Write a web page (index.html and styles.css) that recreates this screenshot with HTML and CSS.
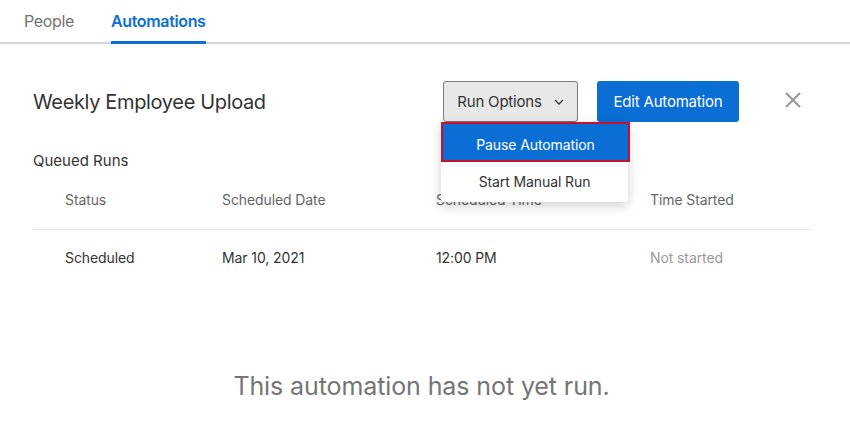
FILE: index.html
```html
<!DOCTYPE html>
<html lang="en">
<head>
    <meta charset="UTF-8">
    <meta name="viewport" content="width=device-width, initial-scale=1.0">
    <title>Automations</title>
    <link rel="stylesheet" href="styles.css">
</head>
<body>
    <nav class="tabs">
        <a class="tab">People</a>
        <a class="tab active">Automations</a>
    </nav>

    <main class="panel">
        <header class="panel-header">
            <h1>Weekly Employee Upload</h1>
            <div class="actions">
                <div class="menu-wrap">
                    <button class="btn btn-secondary">
                        Run Options
                        <svg class="chevron" width="10" height="6" viewBox="0 0 10 6"><path d="M1 1l4 4 4-4" fill="none" stroke="#333" stroke-width="1.3"/></svg>
                    </button>
                    <ul class="menu">
                        <li class="menu-item selected">Pause Automation</li>
                        <li class="menu-item">Start Manual Run</li>
                    </ul>
                </div>
                <button class="btn btn-primary">Edit Automation</button>
                <button class="close" aria-label="Close">
                    <svg width="18" height="18" viewBox="0 0 18 18"><path d="M2 2l14 14M16 2L2 16" stroke="#999" stroke-width="2.2"/></svg>
                </button>
            </div>
        </header>

        <section class="queued">
            <h2>Queued Runs</h2>
            <div class="runs">
                <div class="row head">
                    <span>Status</span>
                    <span>Scheduled Date</span>
                    <span>Scheduled Time</span>
                    <span>Time Started</span>
                </div>
                <div class="row">
                    <span>Scheduled</span>
                    <span>Mar 10, 2021</span>
                    <span>12:00 PM</span>
                    <span class="muted">Not started</span>
                </div>
            </div>
        </section>

        <p class="empty">This automation has not yet run.</p>
    </main>
</body>
</html>
```

FILE: styles.css
```css
:root {
    --blue: #0b6ed4;
    --text: #333;
    --muted: #999;
    --line: #e6e6e6;
}

* {
    margin: 0;
    padding: 0;
    box-sizing: border-box;
    font-family: Inter, 'Noto Sans', sans-serif;
}

body {
    background: #fff;
    color: var(--text);
    width: 850px;
    height: 425px;
    overflow: hidden;
}

.tabs {
    display: flex;
    gap: 37px;
    padding-left: 24px;
    height: 44px;
    border-bottom: 2px solid #d4d4d4;
}

.tab {
    font-size: 16px;
    letter-spacing: -0.35px;
    color: #737373;
    padding-top: 11px;
    line-height: 20px;
}

.tab.active {
    color: var(--blue);
    font-weight: 600;
    border-bottom: 3px solid var(--blue);
    margin-bottom: -2px;
}

.panel {
    padding: 37px 48px 0 33px;
}

.panel-header {
    display: flex;
    align-items: center;
    justify-content: space-between;
}

h1 {
    font-size: 20px;
    font-weight: 400;
    letter-spacing: -0.35px;
}

.actions {
    display: flex;
    align-items: center;
}

.menu-wrap {
    position: relative;
    margin-right: 19px;
}

.btn {
    height: 41px;
    border-radius: 3px;
    font-size: 15px;
    letter-spacing: -0.2px;
    white-space: nowrap;
    padding: 0 10px;
    cursor: pointer;
    display: flex;
    align-items: center;
}

.btn-secondary {
    width: 135px;
    background: #e8e8e8;
    border: 1px solid #7a7a7a;
    color: var(--text);
    justify-content: center;
    gap: 12px;
}

.btn-primary {
    width: 142px;
    background: var(--blue);
    border: none;
    color: #fff;
    justify-content: center;
}

.close {
    background: none;
    border: none;
    margin-left: 45px;
    margin-top: -4px;
    display: flex;
}

.menu {
    position: absolute;
    top: 41px;
    left: -2px;
    width: 187px;
    list-style: none;
    background: #fff;
    border-radius: 3px;
    box-shadow: 0 4px 12px rgba(0,0,0,0.18);
    z-index: 2;
}

.menu-item {
    height: 40px;
    line-height: 40px;
    text-align: center;
    font-size: 14px;
    letter-spacing: -0.1px;
}

.menu-item.selected {
    background: var(--blue);
    color: #fff;
    border: 2px solid #c8102e;
    line-height: 36px;
    padding-top: 3px;
    width: 189px;
}

.queued h2 {
    font-size: 15px;
    font-weight: 400;
    margin-top: 29px;
}

.runs {
    margin-top: 18px;
    width: 780px;
}

.row {
    display: grid;
    grid-template-columns: 157px 214px 214px 1fr;
    padding-left: 32px;
    font-size: 14px;
    letter-spacing: -0.1px;
    height: 55px;
    align-items: center;
}

.row.head {
    color: #666;
    height: 42px;
    align-items: start;
    border-bottom: 1px solid var(--line);
}

.row.head span {
    padding-top: 3px;
}

.muted {
    color: var(--muted);
}

.empty {
    text-align: center;
    font-size: 25px;
    letter-spacing: -0.1px;
    color: #757575;
    margin-top: 86px;
    margin-left: 8px;
}
```
